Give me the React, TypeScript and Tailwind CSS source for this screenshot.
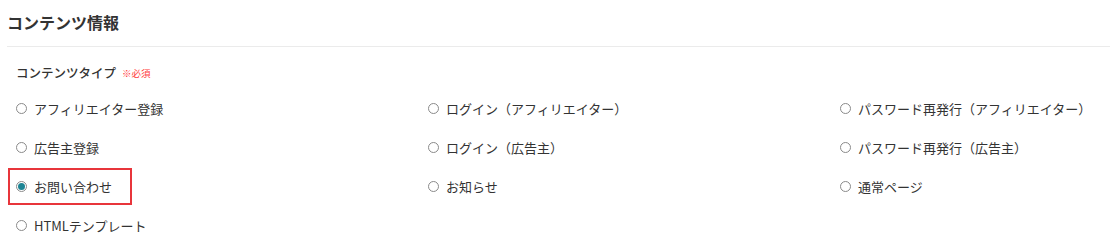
import React from 'react';

const options = [
  'アフィリエイター登録',
  'ログイン（アフィリエイター）',
  'パスワード再発行（アフィリエイター）',
  '広告主登録',
  'ログイン（広告主）',
  'パスワード再発行（広告主）',
  'お問い合わせ',
  'お知らせ',
  '通常ページ',
  'HTMLテンプレート',
];

const selected = 'お問い合わせ';

export default function App() {
  return (
    <div
      className="bg-white text-[#333] pl-[7px] h-[252px] overflow-hidden"
      style={{ fontFamily: '"Noto Sans CJK JP", "Noto Sans", sans-serif' }}
    >
      {/* Header */}
      <div className="h-[47px] flex items-center border-b border-[#ebebeb]">
        <h2 className="text-[16px] font-bold leading-none -mt-[2px]">コンテンツ情報</h2>
      </div>

      <div className="pl-[9px]">
        <div className="pt-[18px] pb-[8px] flex items-center gap-[6px] leading-[16px]">
          <span className="text-[12.5px] font-medium">コンテンツタイプ</span>
          <span className="text-[9.5px] text-[#ff3b3b]">※必須</span>
        </div>

        <div className="grid grid-cols-[412px_412px_1fr]">
          {options.map((label) => (
            <RadioItem key={label} label={label} checked={label === selected} />
          ))}
        </div>
      </div>
    </div>
  );
}

function RadioItem({ label, checked }: { label: string; checked: boolean }) {
  return (
    <label className="relative h-[39px] flex items-center gap-[7px] text-[13px] whitespace-nowrap">
      {checked ? (
        <span className="w-[11px] h-[11px] rounded-full border border-[#8a8a8a] flex items-center justify-center">
          <span className="w-[7px] h-[7px] rounded-full bg-[#1d8494]" />
        </span>
      ) : (
        <span className="w-[11px] h-[11px] rounded-full border border-[#8a8a8a] bg-white" />
      )}
      <span>{label}</span>
      {checked && (
        <span className="absolute left-[-8px] top-[1px] w-[124px] h-[37px] border-2 border-[#e8353b] pointer-events-none" />
      )}
    </label>
  );
}
